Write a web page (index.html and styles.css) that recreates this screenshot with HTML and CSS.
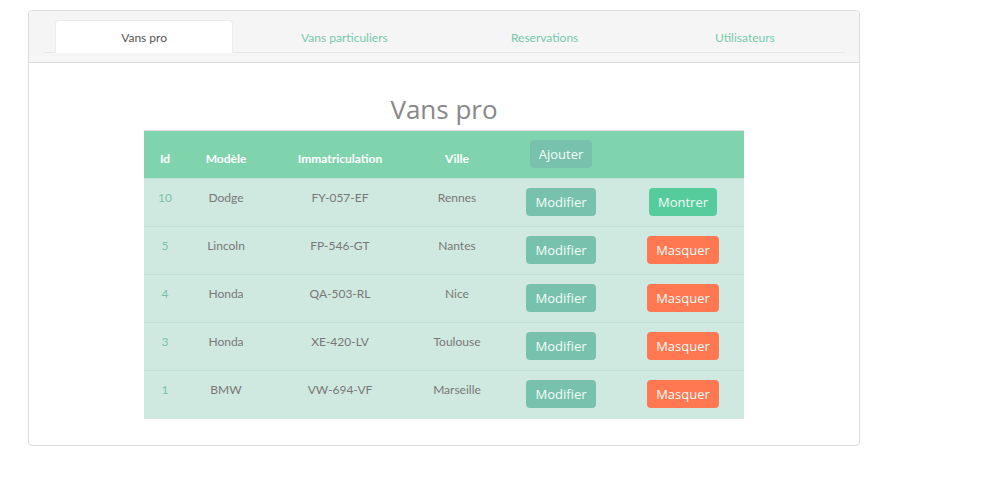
FILE: index.html
```html
<!DOCTYPE html>
<html lang="fr">
<head>
<meta charset="utf-8">
<title>Vans pro</title>
<link rel="stylesheet" href="styles.css">
</head>
<body>
<div class="card">
  <div class="card-header">
    <ul class="tabs">
      <li class="tab active"><span>Vans pro</span></li>
      <li class="tab"><span>Vans particuliers</span></li>
      <li class="tab"><span>Reservations</span></li>
      <li class="tab"><span>Utilisateurs</span></li>
    </ul>
  </div>
  <div class="card-body">
    <h2 class="title">Vans pro</h2>
    <table class="vans">
      <colgroup>
        <col class="c-id"><col class="c-model"><col class="c-immat"><col class="c-ville"><col class="c-act"><col class="c-act">
      </colgroup>
      <thead>
        <tr>
          <th>Id</th><th>Modèle</th><th>Immatriculation</th><th>Ville</th>
          <th><button class="btn btn-primary">Ajouter</button></th><th></th>
        </tr>
      </thead>
      <tbody>
        <tr><td class="id">10</td><td>Dodge</td><td>FY-057-EF</td><td>Rennes</td><td><button class="btn btn-primary">Modifier</button></td><td><button class="btn btn-success">Montrer</button></td></tr>
        <tr><td class="id">5</td><td>Lincoln</td><td>FP-546-GT</td><td>Nantes</td><td><button class="btn btn-primary">Modifier</button></td><td><button class="btn btn-danger">Masquer</button></td></tr>
        <tr><td class="id">4</td><td>Honda</td><td>QA-503-RL</td><td>Nice</td><td><button class="btn btn-primary">Modifier</button></td><td><button class="btn btn-danger">Masquer</button></td></tr>
        <tr><td class="id">3</td><td>Honda</td><td>XE-420-LV</td><td>Toulouse</td><td><button class="btn btn-primary">Modifier</button></td><td><button class="btn btn-danger">Masquer</button></td></tr>
        <tr><td class="id">1</td><td>BMW</td><td>VW-694-VF</td><td>Marseille</td><td><button class="btn btn-primary">Modifier</button></td><td><button class="btn btn-danger">Masquer</button></td></tr>
      </tbody>
    </table>
  </div>
</div>
</body>
</html>
```

FILE: styles.css
```css
* { box-sizing: border-box; }

body {
  margin: 8px;
  font-family: Lato, "Open Sans", sans-serif;
  font-size: 12px;
  color: #888;
  background: #fff;
}

.card {
  margin: 2px 0 0 20px;
  width: 832px;
  height: 436px;
  border: 1px solid #dcdcdc;
  border-radius: 4px;
  background: #fff;
}

.card-header {
  background: #f5f5f5;
  border-bottom: 1px solid #dcdcdc;
  border-radius: 4px 4px 0 0;
  padding: 9px 14px 9px 15px;
}

.tabs {
  list-style: none;
  margin: 0;
  padding: 0;
  display: flex;
  border-bottom: 1px solid #e8e8e8;
}

.tab {
  flex: 1 1 0;
  padding: 0 11px;
  margin-bottom: -1px;
}

.tab span {
  display: block;
  height: 33px;
  line-height: 33px;
  text-align: center;
  color: #78c9ad;
  border: 1px solid transparent;
  border-radius: 4px 4px 0 0;
}

.tab.active span {
  background: #fff;
  color: #555;
  border-color: #ececec #ececec #fff;
}

.card-body {
  padding-top: 30px;
}

.title {
  margin: 0 0 5px;
  text-align: center;
  font-family: "Open Sans", sans-serif;
  font-weight: 400;
  font-size: 26px;
  line-height: 32px;
  color: #888;
}

.vans {
  margin: 0 auto;
  width: 600px;
  border-collapse: collapse;
  table-layout: fixed;
  border-top: 1px solid #e0e0e0;
}

.c-id { width: 42px; }
.c-model { width: 80px; }
.c-immat { width: 148px; }
.c-ville { width: 86px; }
.c-act { width: 122px; }

.vans thead tr { background: #7fd4ae; }

.vans th {
  padding: 9px 4px 10px;
  vertical-align: bottom;
  text-align: center;
  color: #fff;
  font-weight: 700;
  line-height: 18px;
}

.vans tbody tr {
  background: #d0e9e0;
  border-top: 1px solid #c2e1d5;
}

.vans td {
  padding: 9px 4px;
  text-align: center;
  vertical-align: top;
  line-height: 20px;
  color: #777;
  height: 48px;
}

.vans td.id { color: #7cc2aa; }

.btn {
  display: inline-block;
  height: 28px;
  padding: 0 9px;
  border: 0;
  border-radius: 4px;
  font-family: "Open Sans", sans-serif;
  font-size: 13px;
  line-height: 28px;
  color: #f4fbf7;
  cursor: pointer;
  vertical-align: top;
}

.btn-primary { background: #78c2ad; }
.btn-success { background: #56cc9d; }
.btn-danger { background: #ff7851; }
```
